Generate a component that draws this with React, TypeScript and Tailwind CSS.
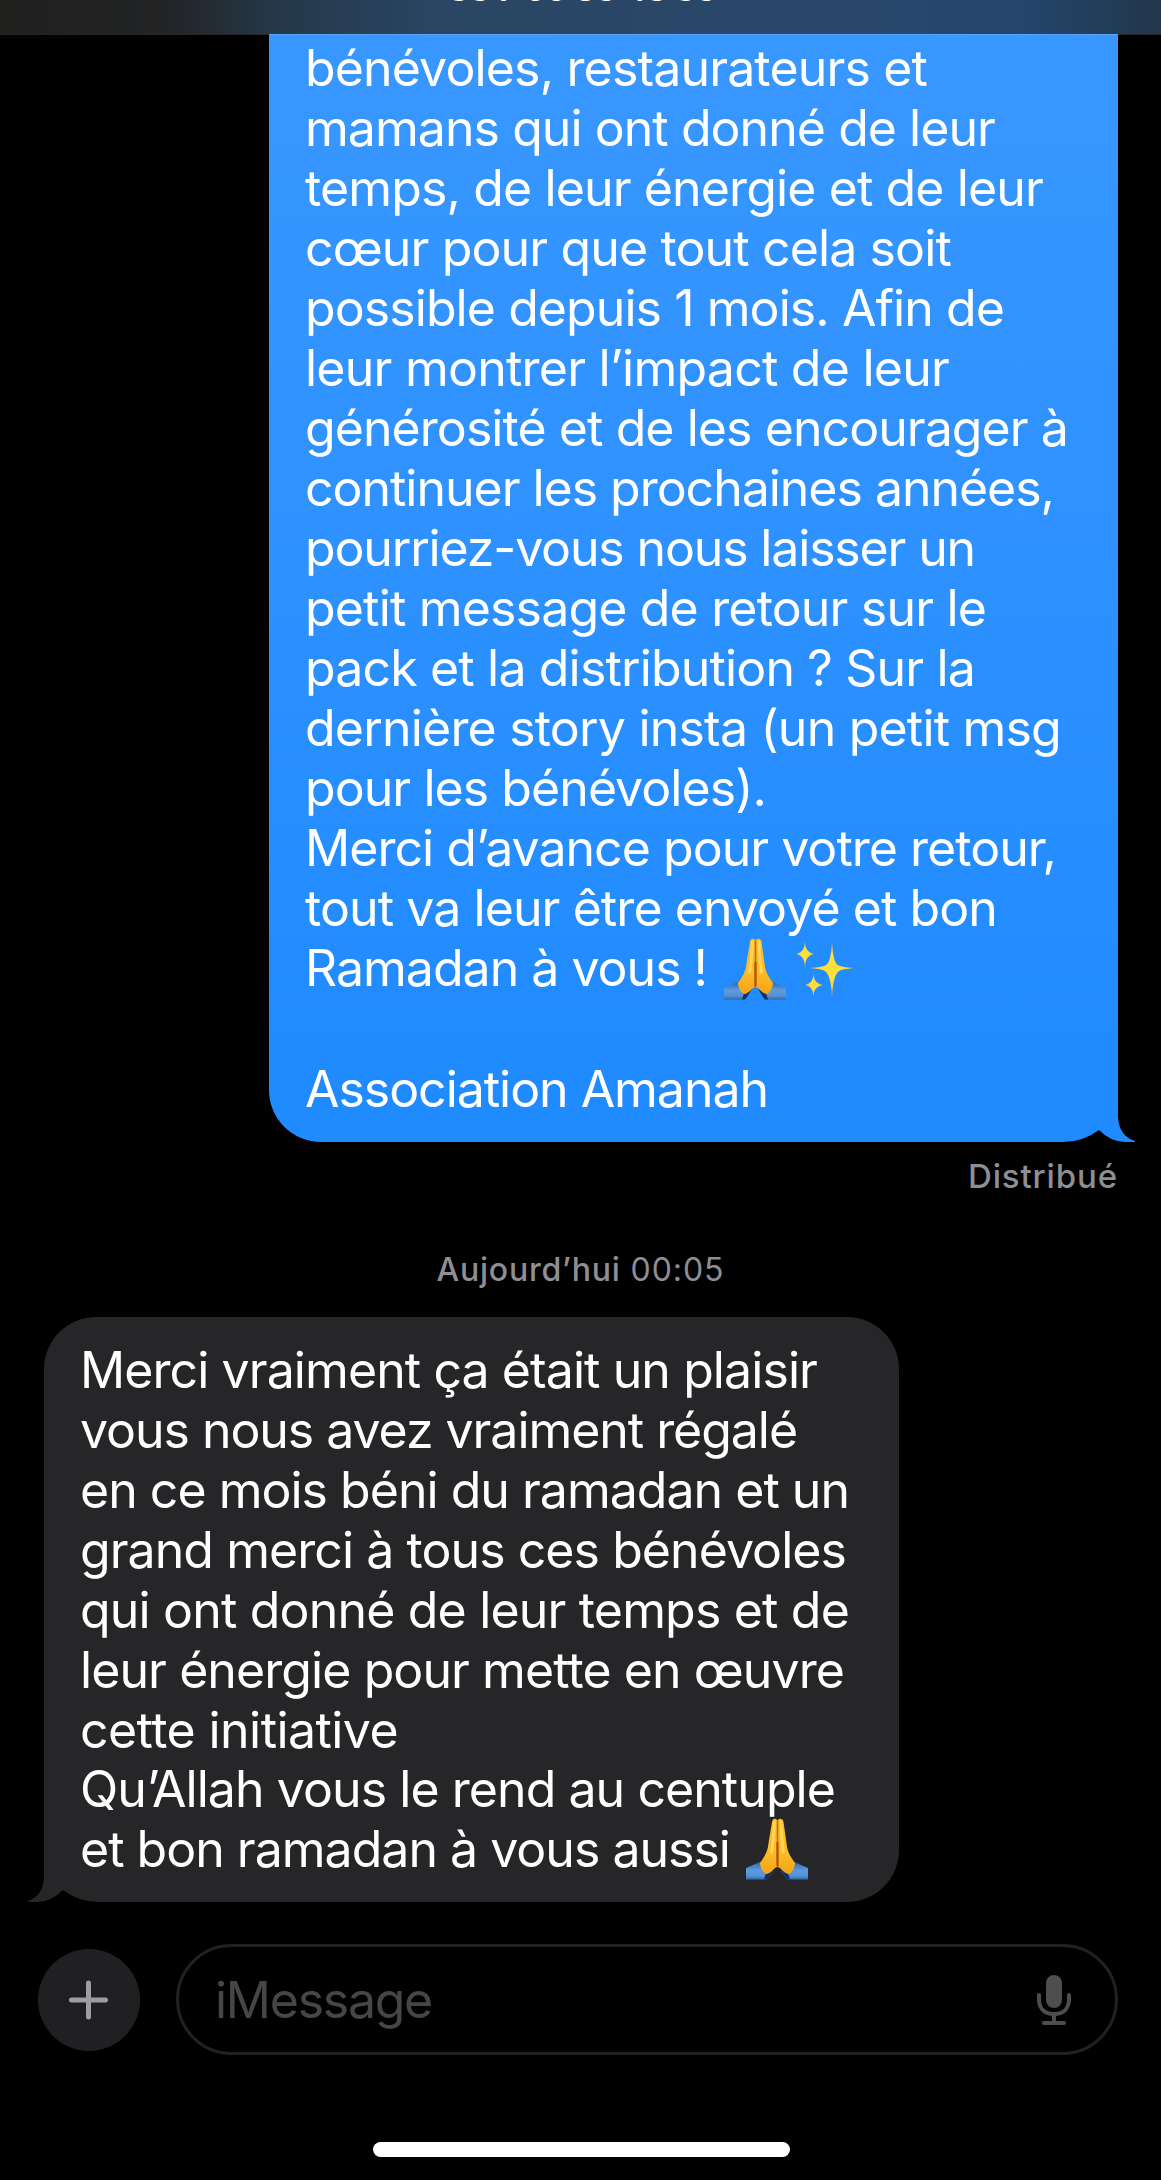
import { useLayoutEffect, useRef, useState } from "react";
import type { ReactNode } from "react";

type LineData = { text: string; width: number; extra?: ReactNode };

/* A line of text whose tracking is adjusted so that it spans a given width. */
function FitText({ text, width }: { text: string; width: number }) {
  const ref = useRef<HTMLSpanElement>(null);
  const [spacing, setSpacing] = useState(0);
  useLayoutEffect(() => {
    const el = ref.current;
    if (!el) return;
    const natural = el.getBoundingClientRect().width;
    setSpacing((width - natural) / text.length);
  }, [text, width]);
  return (
    <span ref={ref} className="inline-block whitespace-pre" style={{ letterSpacing: `${spacing}px` }}>
      {text}
    </span>
  );
}

function PrayHands() {
  return (
    <svg viewBox="0 0 62 62" className="h-[62px] w-[62px] shrink-0">
      <defs>
        <linearGradient id="hand" x1="0" y1="0" x2="0" y2="1">
          <stop offset="0" stopColor="#f9b92c" />
          <stop offset="0.6" stopColor="#fdbb28" />
          <stop offset="1" stopColor="#f5a416" />
        </linearGradient>
        <linearGradient id="sleeve" x1="0" y1="0" x2="0" y2="1">
          <stop offset="0" stopColor="#2c609a" />
          <stop offset="0.5" stopColor="#5b9be0" />
          <stop offset="0.8" stopColor="#5592d6" />
          <stop offset="1" stopColor="#316ba6" />
        </linearGradient>
      </defs>
      <path d="M0 50 L16 43 L27 53 L21 61.500 H0Z" fill="url(#sleeve)" />
      <path d="M62 50 L46 43 L35 53 L41 61.500 H62Z" fill="url(#sleeve)" />
      <path d="M20 55 L28 51 L23 59 L21 61.500 H18Z M42 55 L34 51 L39 59 L41 61.500 H44Z" fill="#0f3260" />
      <path d="M31.500 49 C27 50 25 56 20 56 C16 54 14 48 14 45 C19 38 22 33 22.500 25 L26 4 C26.500 0 30 0 31.500 2.500Z" fill="url(#hand)" />
      <path d="M31.500 49 C36 50 38 56 43 56 C47 54 49 48 49 45 C44 38 41 33 40.500 25 L37.500 4 C37 0 33 0 31.500 2.500Z" fill="url(#hand)" />
      <path d="M28.500 4 C28 14 27 26 25.500 34 M35 4 C35.500 14 36 26 37.500 34" fill="none" stroke="#ffd552" strokeWidth="3" strokeLinecap="round" />
      <path d="M31.500 3 V49" stroke="#c4680f" strokeWidth="1.500" />
      <path d="M31.500 24 V48" stroke="#ad5208" strokeWidth="2.200" />
    </svg>
  );
}

function Sparkles() {
  return (
    <svg viewBox="0 0 60 56" className="h-[56px] w-[60px] shrink-0">
      <defs>
        <radialGradient id="spark">
          <stop offset="0" stopColor="#ffe13a" />
          <stop offset="0.5" stopColor="#fddc3c" />
          <stop offset="1" stopColor="#eaa63c" />
        </radialGradient>
      </defs>
      <path d="M36 0 C37 17 39 23 42 24 C45 26 50 26 59 27 C50 28 45 28 42 31 C39 34 37 40 36 56 C35 40 33 34 30 31 C27 28 22 28 13 27 C22 26 27 26 30 24 C33 22 35 17 36 0Z" fill="url(#spark)" />
      <path d="M9 0 C9.500 8 11 11 18 13 C11 15 9.500 18 9 27 C8.500 18 7 15 0 13 C7 11 8.500 8 9 0Z" fill="url(#spark)" />
      <path d="M17.500 32 C18 40 20 42 27 44 C20 46 18 48 17.500 56 C17 48 15 46 9 44 C15 42 17 40 17.500 32Z" fill="url(#spark)" />
    </svg>
  );
}

const sent: LineData[] = [
  { text: "bénévoles, restaurateurs et", width: 622 },
  { text: "mamans qui ont donné de leur", width: 690 },
  { text: "temps, de leur énergie et de leur", width: 738 },
  { text: "cœur pour que tout cela soit", width: 646 },
  { text: "possible depuis 1 mois. Afin de", width: 699 },
  { text: "leur montrer l’impact de leur", width: 644 },
  { text: "générosité et de les encourager à", width: 763 },
  { text: "continuer les prochaines années,", width: 749 },
  { text: "pourriez-vous nous laisser un", width: 670 },
  { text: "petit message de retour sur le", width: 681 },
  { text: "pack et la distribution ? Sur la", width: 670 },
  { text: "dernière story insta (un petit msg", width: 756 },
  { text: "pour les bénévoles).", width: 461 },
  { text: "Merci d’avance pour votre retour,", width: 751 },
  { text: "tout va leur être envoyé et bon", width: 692 },
  {
    text: "Ramadan à vous !",
    width: 402,
    extra: (
      <span className="ml-[17px] flex items-start gap-[10px]">
        <PrayHands />
        <span className="pt-[3px]">
          <Sparkles />
        </span>
      </span>
    ),
  },
  { text: "", width: 0 },
  { text: "Association Amanah", width: 463 },
];

const received: LineData[] = [
  { text: "Merci vraiment ça était un plaisir", width: 737 },
  { text: "vous nous avez vraiment régalé", width: 717 },
  { text: "en ce mois béni du ramadan et un", width: 769 },
  { text: "grand merci à tous ces bénévoles", width: 766 },
  { text: "qui ont donné de leur temps et de", width: 769 },
  { text: "leur énergie pour mette en œuvre", width: 764 },
  { text: "cette initiative", width: 318 },
  { text: "Qu’Allah vous le rend au centuple", width: 755 },
  {
    text: "et bon ramadan à vous aussi",
    width: 650,
    extra: (
      <span className="-mt-[1px] ml-[16px]">
        <PrayHands />
      </span>
    ),
  },
];

function Lines({ lines }: { lines: LineData[] }) {
  return (
    <div>
      {lines.map((l, i) => (
        <div key={i} className="flex h-[60px] items-start">
          {l.text && <FitText text={l.text} width={l.width} />}
          {l.extra}
        </div>
      ))}
    </div>
  );
}

export default function App() {
  return (
    <div className="flex h-[2180px] w-[1161px] flex-col overflow-hidden bg-black font-['Inter',sans-serif] text-[50px] leading-[60px] text-white">
      <header className="flex h-[34px] shrink-0 items-start justify-center bg-[linear-gradient(90deg,#20201f_0%,#222324_14%,#25384a_24%,#2a4664_38%,#28476b_75%,#24466c_88%,#22364b_100%)]">
        <span className="-mt-[31px] text-[33px] leading-[40px] font-semibold">
          <FitText text="+33 7 66 83 48 33" width={290} />
          <span className="ml-[4px] text-[#8fa0b3]">›</span>
        </span>
      </header>

      <div className="relative flex h-[1108px] shrink-0 flex-col">
        <div className="absolute top-0 left-0 z-10 h-px w-full bg-white/15" />
        <section className="relative ml-[269px] h-[1108px] w-[849px] rounded-bl-[52px] bg-[linear-gradient(180deg,#3997ff_0%,#2d91ff_50%,#208bff_92%)] pt-[4px] pl-[36px]">
          <svg viewBox="0 0 72 80" className="absolute right-[-17px] bottom-0 h-[80px] w-[72px]">
            <path d="M50 0 H55 V55 Q56 74 72 79 L72 80 H0 V40 H50Z" fill="#208bff" />
            <path d="M0 80 Q20 80 36 68 Q48 80 62 80 V82 H0Z" fill="#000" />
          </svg>
          <div className="relative">
            <Lines lines={sent.slice(0, 15)} />
            <Lines lines={sent.slice(15, 16)} />
            <div className="mt-px">
              <Lines lines={sent.slice(16)} />
            </div>
          </div>
        </section>
      </div>

      <div className="mt-[14px] flex h-[40px] shrink-0 justify-end pr-[43px] text-[33px] leading-[40px] font-medium text-[#8e8e94]">
        <FitText text="Distribué" width={150} />
      </div>

      <div className="mt-[54px] flex h-[40px] shrink-0 justify-center gap-[10px] text-[32px] leading-[40px] text-[#8e8e94]">
        <span className="font-medium">
          <FitText text="Aujourd’hui" width={184} />
        </span>
        <FitText text="00:05" width={94} />
      </div>

      <section className="relative mt-[27px] ml-[44px] h-[585px] w-[855px] shrink-0 rounded-[52px] rounded-bl-none bg-[#262628] pt-[23px] pl-[36px]">
        <svg viewBox="0 0 72 80" className="absolute bottom-0 left-[-17px] h-[80px] w-[72px]">
          <path d="M17 0 V55 Q16 74 1 79 V80 H72 V0Z" fill="#262628" />
          <path d="M72 80 Q52 80 36 68 Q24 80 10 80 V82 H72Z" fill="#000" />
        </svg>
        <div className="relative">
          <Lines lines={received.slice(0, 7)} />
          <div className="-mt-px">
            <Lines lines={received.slice(7)} />
          </div>
        </div>
      </section>

      <div className="mt-[42px] flex h-[111px] shrink-0 items-center pr-[43px] pl-[38px]">
        <button className="flex h-[102px] w-[102px] items-center justify-center rounded-full bg-[#202022]">
          <svg viewBox="0 0 40 40" className="h-[40px] w-[40px]">
            <path d="M19.500 3 V37 M2.500 20 H36.500" stroke="#9e9ea1" strokeWidth="5" strokeLinecap="round" />
          </svg>
        </button>
        <div className="ml-[36px] flex h-[111px] flex-1 items-center justify-between rounded-full border-[3px] border-[#202122] pr-[43px] pl-[36px] text-[#464648]">
          <FitText text="iMessage" width={217} />
          <svg viewBox="0 0 36 52" className="h-[52px] w-[36px]">
            <rect x="10" y="1" width="16" height="33" rx="8" fill="#4d4e50" />
            <path d="M3 21 V25 C3 35 9 40 18 40 C27 40 33 35 33 25 V21 M18 40 V49 M8 49 H28" fill="none" stroke="#4d4e50" strokeWidth="4" strokeLinecap="round" />
          </svg>
        </div>
      </div>

      <div className="mt-[87px] ml-[373px] h-[15px] w-[417px] shrink-0 rounded-full bg-white" />
    </div>
  );
}
